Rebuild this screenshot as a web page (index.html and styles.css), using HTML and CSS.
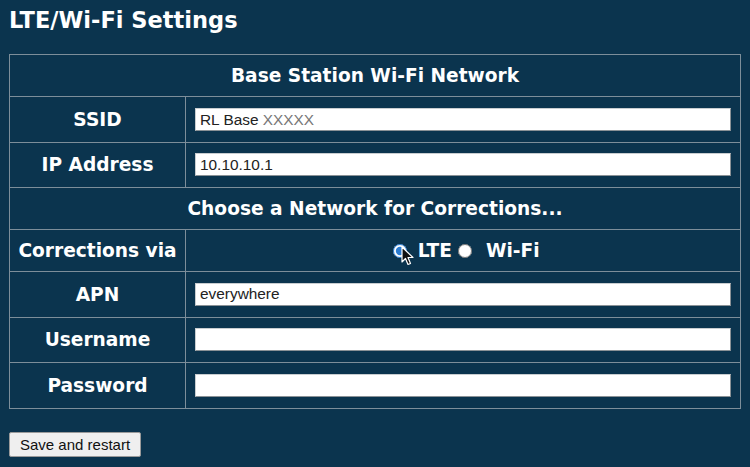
FILE: index.html
```html
<!DOCTYPE html>
<html lang="en">
<head>
<meta charset="utf-8">
<title>LTE/Wi-Fi Settings</title>
<link rel="stylesheet" href="styles.css">
</head>
<body>
<h1 class="title">LTE/Wi-Fi Settings</h1>
<form class="settings">
  <table class="grid">
    <tr class="row-head"><th colspan="2">Base Station Wi-Fi Network</th></tr>
    <tr class="row-field">
      <th class="label">SSID</th>
      <td class="field"><div class="fake-input"><span class="val">RL Base </span><span class="ph">XXXXX</span></div></td>
    </tr>
    <tr class="row-field">
      <th class="label">IP Address</th>
      <td class="field"><input class="text" type="text" value="10.10.10.1"></td>
    </tr>
    <tr class="row-head"><th colspan="2">Choose a Network for Corrections...</th></tr>
    <tr class="row-radio">
      <th class="label">Corrections via</th>
      <td class="radios">
        <span class="radio-wrap">
          <input class="radio" type="radio" name="net" id="lte" checked>
          <svg class="cursor" width="13" height="20" viewBox="0 0 13 20"><path d="M1 1 L1 16 L4.5 12.5 L7 18.5 L9.5 17.5 L7 11.5 L12 11.5 Z" fill="#111" stroke="#fff" stroke-width="1.2" stroke-linejoin="round"/></svg>
        </span>
        <label for="lte">LTE</label>
        <input class="radio" type="radio" name="net" id="wifi">
        <label for="wifi" class="wifi">Wi-Fi</label>
      </td>
    </tr>
    <tr class="row-field">
      <th class="label">APN</th>
      <td class="field"><input class="text" type="text" value="everywhere"></td>
    </tr>
    <tr class="row-field">
      <th class="label">Username</th>
      <td class="field"><input class="text" type="text" value=""></td>
    </tr>
    <tr class="row-field">
      <th class="label">Password</th>
      <td class="field"><input class="text" type="password" value=""></td>
    </tr>
  </table>
  <button class="save" type="button">Save and restart</button>
</form>
</body>
</html>
```
FILE: styles.css
```css
html, body {
  margin: 0;
  padding: 0;
}
body {
  background: #0b344e;
  color: #ffffff;
  font-family: "DejaVu Sans", Verdana, sans-serif;
  padding: 7px 9px 0 9px;
}
.title {
  font-size: 22.5px;
  line-height: 26px;
  font-weight: bold;
  margin: 0 0 21px 0;
}
.grid {
  border-collapse: collapse;
  width: 732px;
}
.grid th, .grid td {
  border: 1px solid #7d8e9a;
  padding: 0;
}
.grid th {
  font-size: 18.6px;
  font-weight: bold;
  text-align: center;
}
.grid .label {
  width: 175px;
}
.row-head th { height: 41px; }
.row-field th, .row-field td { height: 44.5px; }
.row-radio th, .row-radio td { height: 41px; }
.grid .field {
  padding: 0 9px 0 9px;
}
.text, .fake-input {
  box-sizing: border-box;
  display: block;
  width: 536px;
  height: 23px;
  margin: 0;
  padding: 1px 4px;
  border: 1px solid #8a9196;
  border-top-color: #c8cdd0;
  border-left-color: #c8cdd0;
  background: #fff;
  font-family: "Liberation Sans", Arial, sans-serif;
  font-size: 15.4px;
  line-height: 19px;
  color: #222;
  outline: none;
}
.fake-input .ph { color: #777; }
.grid .radios {
  text-align: center;
  font-size: 18.6px;
  font-weight: bold;
  white-space: nowrap;
  padding-left: 7px;
}
.radio-wrap {
  position: relative;
  display: inline-block;
}
.radio {
  width: 14px;
  height: 14px;
  margin: 0 4px 0 0;
  vertical-align: -1px;
  accent-color: #2b7bd0;
}
.cursor {
  position: absolute;
  left: 8px;
  top: 6px;
}
.radios label {
  color: #fff;
}
.radios label.wifi {
  margin-left: 3px;
}
.save {
  margin: 23px 0 0 0;
  height: 25px;
  padding: 0 10px;
  font-family: "Liberation Sans", Arial, sans-serif;
  font-size: 15px;
  color: #111;
  background: #efefef;
  border: 1px solid #9a9a9a;
  border-radius: 2px;
}
```
